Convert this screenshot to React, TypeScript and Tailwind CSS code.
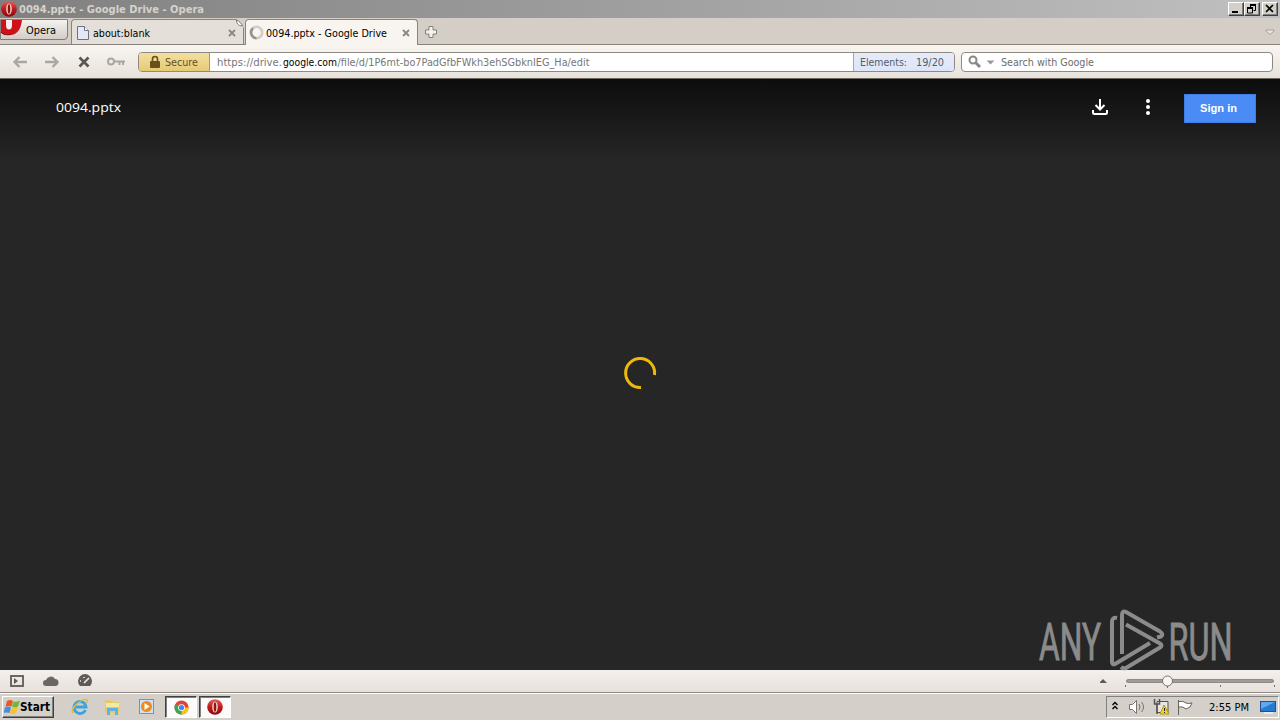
import type { ReactNode } from "react";

const ui = "font-['DejaVu_Sans_Condensed','DejaVu_Sans',sans-serif] whitespace-nowrap";

interface LabelProps {
  width: number;
  size?: number;
  children: ReactNode;
  className?: string;
}

// Text run stretched to a fixed advance width, as the bitmap UI font would give.
function Label({ width, size = 11, children, className = "" }: LabelProps) {
  return (
    <svg width={width} height="16" className={`${ui} block shrink-0 overflow-visible fill-current ${className}`}>
      <text x="0" y="12" fontSize={size} textLength={width} lengthAdjust="spacingAndGlyphs">
        {children}
      </text>
    </svg>
  );
}

function OperaIcon({ size = 16 }: { size?: number }) {
  return (
    <svg width={size} height={size} viewBox="0 0 16 16" className="block shrink-0">
      <defs>
        <linearGradient id="opera" x1="0" y1="0" x2="0" y2="1">
          <stop offset="0" stopColor="#e2605a" />
          <stop offset="0.5" stopColor="#c01a1a" />
          <stop offset="1" stopColor="#8a0a0a" />
        </linearGradient>
      </defs>
      <circle cx="8" cy="8" r="7.8" fill="url(#opera)" />
      <ellipse cx="8" cy="8" rx="2.8" ry="5.6" fill="#f4d5d2" />
      <ellipse cx="8" cy="8" rx="1.3" ry="4.8" fill="#8e1512" />
    </svg>
  );
}

function CloseMark({ className = "" }: { className?: string }) {
  return (
    <svg width="8" height="8" viewBox="0 0 8 8" className={`block shrink-0 ${className}`}>
      <path d="M1 1l6 6M7 1L1 7" stroke="#8c8984" strokeWidth="1.9" />
    </svg>
  );
}

function WindowButton({ children }: { children: ReactNode }) {
  return (
    <div className="h-[14px] w-4 border border-t-white border-l-white border-r-[#404040] border-b-[#404040] bg-[#d4d0c8] shadow-[inset_-1px_-1px_0_#808080]">
      <svg width="14" height="12" viewBox="0 0 14 12" className="block" stroke="#000" fill="none">
        {children}
      </svg>
    </div>
  );
}

function TitleBar() {
  return (
    <div className="flex h-[18px] items-center bg-linear-to-r from-[#808080] to-[#c0c0c0] pl-px pr-[2px]">
      <OperaIcon />
      <Label width={185} className="ml-[2px] font-bold text-[#d6d2ca]">
        0094.pptx - Google Drive - Opera
      </Label>
      <div className="ml-auto flex">
        <WindowButton>
          <path d="M3 9h6" strokeWidth="2" />
        </WindowButton>
        <WindowButton>
          <path d="M5 1.500h6M5 2.500h6M5.500 2v2M10.500 2v5.500h-2M2 4.500h6M2 5.500h6M2.500 5v5h5V5" />
        </WindowButton>
        <div className="w-[2px]" />
        <WindowButton>
          <path d="M3 2l7 7M10 2L3 9" strokeWidth="1.7" />
        </WindowButton>
      </div>
    </div>
  );
}

function TabBar() {
  return (
    <div className="flex h-[27px] items-start border-b border-[#87837c] bg-[#d5cec7]">
      <div className="relative mt-px flex h-[21px] w-[68px] items-center rounded-br-[4px] border border-[#817d78] bg-linear-to-b from-[#f4f2ef] to-[#d2cdc7] pl-[25px]">
        <svg width="22" height="17" viewBox="0 0 22 17" className="absolute top-0 left-0">
          <path d="M0 0H21C20 8 17 15 9 15C5 15 2 14 0 13Z" fill="#cf1219" />
          <path d="M5 0h6v5c0 3-1 4.500-3 4.500S5 8 5 5Z" fill="#f4eeee" />
          <path d="M0 12c2 3 6 3 10 2.500" stroke="#8f080b" fill="none" />
        </svg>
        <Label width={30} className="text-black">Opera</Label>
      </div>
      <div className="relative ml-[3px] mt-px flex h-[25px] w-[173px] items-center rounded-tl-[4px] border border-b-0 border-[#89857e] bg-[#e5dfda] pl-[5px] pt-[2px]">
        <svg width="12" height="14" viewBox="0 0 12 14" className="shrink-0">
          <path d="M.5.5h7l4 4v9H.5z" fill="#e4e9f7" stroke="#6f7381" />
          <path d="M7.500.5v4h4" fill="#fff" stroke="#6f7381" />
        </svg>
        <Label width={57} className="ml-[4px] text-black">about:blank</Label>
        <CloseMark className="ml-[78px]" />
        <svg width="9" height="9" viewBox="0 0 9 9" className="absolute -top-px -right-px">
          <path d="M1 0H9V9Z" fill="#d5cec7" />
          <path d="M1.500 1C1.500 4 3 7 7.500 7C7 5 4 2 1.500 1Z" fill="#fff" stroke="#77736d" />
        </svg>
      </div>
      <div className="ml-px mt-px flex h-[26px] w-[173px] items-center rounded-t-[4px] border border-b-0 border-[#89857e] bg-[#f8f5f0] pl-[3px] pt-px">
        <svg width="15" height="15" viewBox="0 0 15 15" fill="none" className="mb-[2px] shrink-0">
          <circle cx="7.500" cy="7.500" r="5.700" stroke="#d0cdca" strokeWidth="2.600" />
          <path d="M7.500 13.200A5.700 5.700 0 0 1 4 3.300" stroke="#96938f" strokeWidth="2.600" />
        </svg>
        <Label width={121} className="ml-[2px] text-black">0094.pptx - Google Drive</Label>
        <CloseMark className="ml-[15px]" />
      </div>
      <svg width="14" height="14" viewBox="0 0 14 14" className="ml-[6px] mt-[7px]">
        <path d="M5 1.500h4V5h3.500v4H9v3.500H5V9H1.500V5H5z" fill="#f5f1ec" stroke="#86827c" />
      </svg>
      <svg width="10" height="7" viewBox="0 0 10 7" className="ml-auto mr-[5px] mt-[11px]">
        <path d="M1 1h8v1L5 5.500 1 2z" fill="#ebe6e1" stroke="#a5a09a" />
      </svg>
    </div>
  );
}

function Toolbar() {
  return (
    <div className="flex h-[34px] items-center border-b border-[#6b6660] bg-linear-to-b from-[#f8f5f0] to-[#e9e2dc] text-[#6c6c6c]">
      <svg width="138" height="20" viewBox="0 0 138 20" fill="none" className="shrink-0">
        <path d="M27 10H15M19.500 5L14.500 10l5 5" stroke="#aaa6a2" strokeWidth="2.300" />
        <path d="M45 10h12M52.500 5l5 5-5 5" stroke="#aaa6a2" strokeWidth="2.300" />
        <path d="M79.500 5.500l9 9M88.500 5.500l-9 9" stroke="#5a5651" strokeWidth="2.700" />
        <circle cx="111" cy="9.500" r="3" stroke="#aaa6a2" strokeWidth="2" />
        <path d="M114 9.500h11M119.500 10v3M123 10v3" stroke="#aaa6a2" strokeWidth="2" />
      </svg>
      <div className="flex h-5 w-[817px] overflow-hidden rounded-[4px] border border-[#8e8a83] bg-white">
        <div className="flex w-[71px] shrink-0 items-center border-r border-[#b69a51] bg-linear-to-b from-[#f5dfa0] to-[#e5ca75] pl-[10px] text-[#655020]">
          <svg width="12" height="14" viewBox="0 0 12 14">
            <path d="M3.500 7V4a2.500 2.500 0 0 1 5 0v3" fill="none" stroke="#67501a" strokeWidth="1.600" />
            <rect x="1" y="6" width="10" height="7" rx="1" fill="#67501a" />
          </svg>
          <Label width={33} className="ml-[4px]">Secure</Label>
        </div>
        <div className="flex flex-1 items-center pl-[7px] text-[#777]">
          <svg width="373" height="16" className={`${ui} block overflow-visible fill-current`}>
            <text y="12" fontSize="11" textLength="65" lengthAdjust="spacingAndGlyphs">https://drive.</text>
            <text x="66" y="12" fontSize="11" textLength="54" lengthAdjust="spacingAndGlyphs" className="fill-black">google.com</text>
            <text x="120.500" y="12" fontSize="11" textLength="252" lengthAdjust="spacingAndGlyphs">/file/d/1P6mt-bo7PadGfbFWkh3ehSGbknIEG_Ha/edit</text>
          </svg>
        </div>
        <div className="flex w-[101px] items-center border-l border-[#a4a7b0] bg-linear-to-b from-[#e6ebf8] to-[#dce5fa] pl-[6px] pt-px text-[#565b69]">
          <Label width={47}>Elements:</Label>
          <Label width={28} className="ml-[9px]">19/20</Label>
        </div>
      </div>
      <div className="ml-[6px] flex h-5 w-[312px] items-center rounded-[4px] border border-[#8e8a83] bg-white pl-[6px]">
        <svg width="27" height="14" viewBox="0 0 27 14">
          <circle cx="5" cy="5" r="3.500" fill="none" stroke="#898989" strokeWidth="2" />
          <path d="M7.500 7.500L12 12" stroke="#898989" strokeWidth="3" />
          <path d="M18.500 5.500h8l-4 4z" fill="#999" />
        </svg>
        <Label width={93} className="ml-[6px]">Search with Google</Label>
      </div>
    </div>
  );
}

function Watermark() {
  return (
    <svg width="204" height="72" viewBox="1034 602 204 72" className="absolute top-[523px] left-[1034px] z-10 font-[Roboto,sans-serif]" fill="#8b8b8b">
      <g stroke="#8b8b8b" strokeWidth="0.9">
        <text x="1039" y="659.500" fontSize="51" textLength="62" lengthAdjust="spacingAndGlyphs">ANY</text>
        <text x="1168.500" y="659.500" fontSize="51" textLength="64" lengthAdjust="spacingAndGlyphs">RUN</text>
      </g>
      <g fill="none" stroke="#8b8b8b" strokeWidth="4" strokeLinejoin="round">
        <path d="M1117 618q-5-1-5 4v40q0 3 3 2l35-21" />
        <path d="M1122 654V615q0-5 4-3l34 19.500q4 3 1 5l-4 1" />
        <path d="M1126 624.500l34 19q3 2 0 4l-34 20.500q-3 1-5-1" />
      </g>
    </svg>
  );
}

function Viewer() {
  return (
    <div className="relative flex h-[591px] flex-col bg-[#262626]">
      <div className="flex h-[80px] items-start bg-linear-to-b from-[#0d0d0d] to-[#262626] pl-[56px] pr-6 pt-[15px]">
        <Label width={65} size={13} className="mt-[6px] font-['Open_Sans',sans-serif] text-white">0094.pptx</Label>
        <svg width="18" height="18" viewBox="0 0 18 18" fill="none" stroke="#fff" strokeWidth="2" className="ml-auto mt-[4px]">
          <path d="M9 1v10M4.500 7L9 11.500 13.500 7M2 12v2.500q0 1.500 1.500 1.500h11q1.500 0 1.500-1.500V12" />
        </svg>
        <svg width="6" height="18" viewBox="0 0 6 18" fill="#fff" className="ml-9 mt-[4px]">
          <circle cx="3" cy="3" r="2" />
          <circle cx="3" cy="9" r="2" />
          <circle cx="3" cy="15" r="2" />
        </svg>
        <div className="ml-[33px] flex h-[29px] w-[72px] items-center border border-[#3d7de8] bg-[#4a8bf5] pb-px pl-[15px] text-white">
          <Label width={37} className="font-['Liberation_Sans',sans-serif] font-bold">Sign in</Label>
        </div>
      </div>
      <svg width="34" height="34" viewBox="0 0 34 34" fill="none" className="mx-auto mt-[197px]">
        <path d="M31.500 19A14.500 14.500 0 1 0 18 31.500" stroke="#edb90b" strokeWidth="3" />
      </svg>
      <Watermark />
    </div>
  );
}

function StatusBar() {
  return (
    <div className="flex h-[23px] items-center border-b border-[#8f8a83] bg-linear-to-b from-[#f5f0ed] to-[#e7e0da]">
      <svg width="95" height="20" viewBox="0 0 95 20" fill="none">
        <rect x="11" y="5" width="12" height="10" stroke="#5e5a55" strokeWidth="1.800" />
        <path d="M14 7l4 3-4 3z" fill="#5e5a55" />
        <path d="M46 15a3 3 0 0 1 0-6a5 5 0 0 1 9-1a3.500 3.500 0 0 1 0 7z" fill="#6b6762" />
        <path d="M80 15a7 7 0 1 1 10 0z" fill="#5e5a55" />
        <path d="M84 12l5-5M80 10h1M84 6v1" stroke="#eee8e3" strokeWidth="1.700" />
      </svg>
      <svg width="180" height="22" viewBox="0 0 180 22" className="ml-auto">
        <path d="M-1 13h8l-4-4z" fill="#5e5a55" />
        <rect x="26.500" y="9.500" width="147" height="3" rx="1.500" fill="#a19b95" stroke="#77726c" strokeWidth="0.700" />
        <path d="M25.500 15v2M67.500 15v3M120.500 15v2M174.500 15v2" stroke="#77726c" />
        <circle cx="67.500" cy="11" r="5" fill="#f8f6f3" stroke="#77726c" />
      </svg>
    </div>
  );
}

function Taskbar() {
  return (
    <div className="flex h-[27px] items-start border-t border-white bg-[#d4cfc8] pt-[2px]">
      <div className="ml-[2px] flex h-[22px] w-[52px] items-center border border-t-white border-l-white border-r-[#404040] border-b-[#404040] pl-px shadow-[inset_-1px_-1px_0_#808080]">
        <svg width="17" height="16" viewBox="0 0 17 16" className="shrink-0">
          <path d="M3 2q3-2 6 0L7.500 7.500q-3-1-6 0z" fill="#e95a25" />
          <path d="M9.500 2.500q3 1 6.500-1l-2 6q-3 2-6 0z" fill="#74b63c" />
          <path d="M1 8.500q3-2 6 0L5.500 14q-3-1-6 0z" fill="#488edb" />
          <path d="M7.500 9q3 1 6.500-1l-2 6q-3 2-6 0z" fill="#f4c42d" />
        </svg>
        <Label width={30} size={12} className="-ml-px font-bold text-black">Start</Label>
      </div>
      <svg width="18" height="20" viewBox="0 0 18 20" fill="none" className="ml-[17px] mt-px">
        <path d="M14.500 13a6 6 0 1 1 .5-3H4" stroke="#39a4df" strokeWidth="2.800" />
        <path d="M2 16C-2 12 12 0 16 3q1 1-1 4" stroke="#e4b83f" strokeWidth="1.400" />
      </svg>
      <svg width="17" height="20" viewBox="0 0 17 20" className="ml-[15px] mt-px">
        <path d="M1 3h5l2 2h7v11H1z" fill="#e9c866" />
        <path d="M2 6h13v4H2z" fill="#f8e7a3" />
        <path d="M3 18v-7h11v7h-3v-4H6v4z" fill="#5eb4df" />
      </svg>
      <svg width="17" height="20" viewBox="0 0 17 20" className="ml-[17px] mt-px">
        <rect x="1.500" y="2.500" width="14" height="14" fill="#cce3f5" stroke="#6498cc" />
        <circle cx="8.500" cy="9.500" r="5.500" fill="#f18a1c" />
        <path d="M6.500 6l5 3.500-5 3.500z" fill="#fff" />
      </svg>
      <div className="ml-[10px] flex h-[22px] w-8 items-center justify-center border border-t-[#404040] border-l-[#404040] border-r-white border-b-white bg-[#fbfbfb] pl-px pt-px shadow-[inset_1px_1px_0_#808080]">
        <svg width="15" height="15" viewBox="0 0 16 16">
          <circle cx="8" cy="8" r="7.500" fill="#e04436" />
          <path d="M8 8L1.500 4.300A7.500 7.500 0 0 0 8 15.500z" fill="#38a853" />
          <path d="M8 8h7V5a7.500 7.500 0 0 1-7 10.500z" fill="#fbc116" />
          <circle cx="8" cy="8" r="3.600" fill="#fff" />
          <circle cx="8" cy="8" r="2.800" fill="#4285f4" />
        </svg>
      </div>
      <div className="ml-[2px] flex h-[22px] w-8 items-center justify-center border border-t-[#404040] border-l-[#404040] border-r-white border-b-white bg-[#fbfbfb] pr-px shadow-[inset_1px_1px_0_#808080]">
        <OperaIcon />
      </div>
      <div className="ml-auto mr-px flex h-[22px] w-[173px] items-center border border-t-[#808080] border-l-[#808080] border-r-white border-b-white">
        <svg width="86" height="20" viewBox="0 0 86 20" fill="none" className="shrink-0">
          <path d="M5.500 8l2.500-2.500L10.500 8M5.500 12L8 9.500l2.500 2.500" stroke="#000" strokeWidth="1.400" />
          <path d="M22.500 7.500h3l4-4v13l-4-4h-3z" fill="#fff" stroke="#77736e" />
          <path d="M32 7q2 3 0 6M34.500 5q4 5 0 10" stroke="#77736e" />
          <path d="M50 4.500h11v11H50z" fill="#e6e6e4" stroke="#55524f" />
          <path d="M47.500 2v5h5V2M50 7v10" stroke="#55524f" strokeWidth="1.500" />
          <path d="M57 8l5 9H53z" fill="#f8d51f" stroke="#b79710" />
          <path d="M57.500 11v3M57.500 15v1" stroke="#222" />
          <path d="M71.500 3v15M72 4.500q4-1 7 1.500q2 1 6 0-1 5-6 6-3-3-7-2" fill="#fff" stroke="#66625e" />
        </svg>
        <Label width={40} className="ml-[16px] text-black">2:55 PM</Label>
        <svg width="16" height="16" viewBox="0 0 16 16" className="ml-[11px]">
          <rect x="0.500" y="2.500" width="15" height="10" fill="#247bd0" stroke="#244f91" />
          <path d="M1 3h14L1 10z" fill="#5eaaf0" />
          <path d="M4 14h9" stroke="#e3eaf4" strokeWidth="2" />
        </svg>
      </div>
    </div>
  );
}

export default function App() {
  return (
    <div className="flex h-[720px] w-[1280px] flex-col overflow-hidden">
      <TitleBar />
      <TabBar />
      <Toolbar />
      <Viewer />
      <StatusBar />
      <Taskbar />
    </div>
  );
}
